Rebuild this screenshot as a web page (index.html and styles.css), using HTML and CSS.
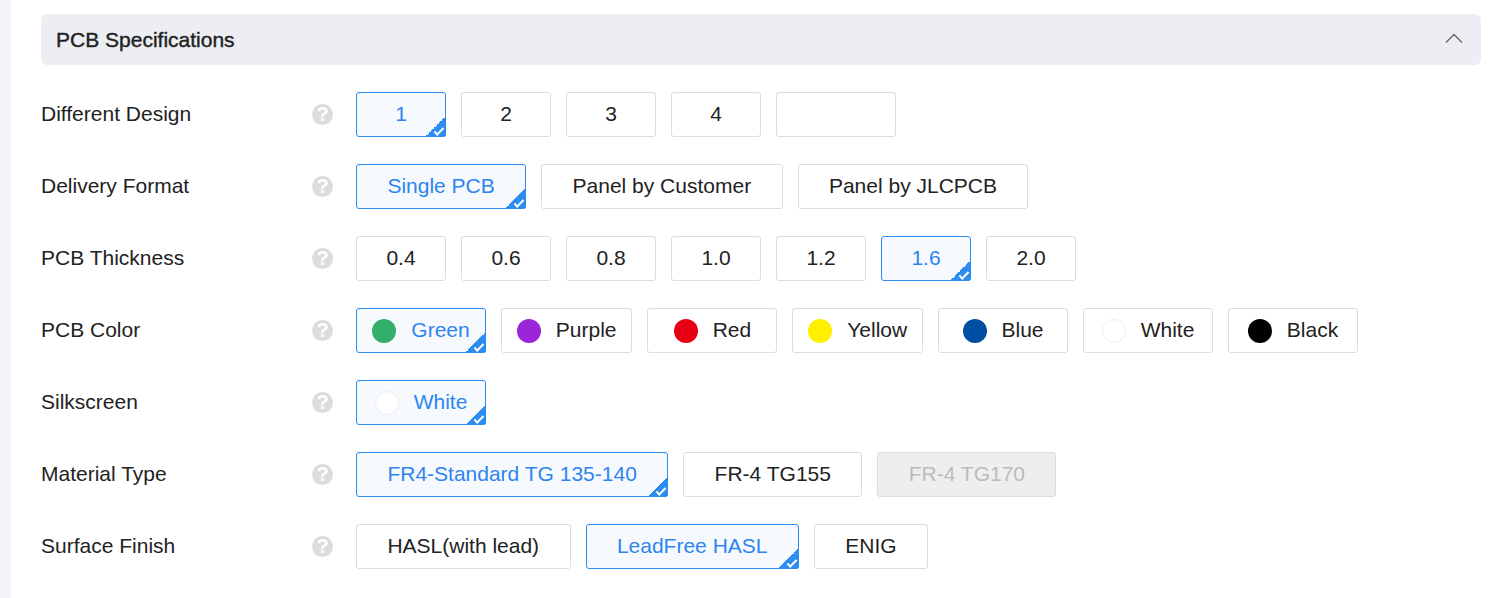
FILE: index.html
```html
<!DOCTYPE html>
<html>
<head>
    <title>PCB Specifications</title>
    <link rel="stylesheet" href="styles.css">
</head>
<body>
    <div class="page">
        <div class="section-head">
            <h2>PCB Specifications</h2>
            <svg class="arrow" width="18" height="10" viewBox="0 0 18 10"><path d="M1 9.5L9 1.5L17 9.5" fill="none" stroke="#666" stroke-width="1.3"/></svg>
        </div>

        <div class="row">
            <label>Different Design</label>
            <span class="help">?</span>
            <div class="options">
                <button class="opt num active">1</button>
                <button class="opt num">2</button>
                <button class="opt num">3</button>
                <button class="opt num">4</button>
                <button class="opt blank"></button>
            </div>
        </div>

        <div class="row">
            <label>Delivery Format</label>
            <span class="help">?</span>
            <div class="options">
                <button class="opt active">Single PCB</button>
                <button class="opt">Panel by Customer</button>
                <button class="opt">Panel by JLCPCB</button>
            </div>
        </div>

        <div class="row">
            <label>PCB Thickness</label>
            <span class="help">?</span>
            <div class="options">
                <button class="opt num">0.4</button>
                <button class="opt num">0.6</button>
                <button class="opt num">0.8</button>
                <button class="opt num">1.0</button>
                <button class="opt num">1.2</button>
                <button class="opt num active">1.6</button>
                <button class="opt num">2.0</button>
            </div>
        </div>

        <div class="row">
            <label>PCB Color</label>
            <span class="help">?</span>
            <div class="options">
                <button class="opt color active"><i class="dot green"></i>Green</button>
                <button class="opt color"><i class="dot purple"></i>Purple</button>
                <button class="opt color"><i class="dot red"></i>Red</button>
                <button class="opt color"><i class="dot yellow"></i>Yellow</button>
                <button class="opt color"><i class="dot blue"></i>Blue</button>
                <button class="opt color"><i class="dot white"></i>White</button>
                <button class="opt color"><i class="dot black"></i>Black</button>
            </div>
        </div>

        <div class="row">
            <label>Silkscreen</label>
            <span class="help">?</span>
            <div class="options">
                <button class="opt color active"><i class="dot white"></i>White</button>
            </div>
        </div>

        <div class="row">
            <label>Material Type</label>
            <span class="help">?</span>
            <div class="options">
                <button class="opt active">FR4-Standard TG 135-140</button>
                <button class="opt">FR-4 TG155</button>
                <button class="opt disabled">FR-4 TG170</button>
            </div>
        </div>

        <div class="row">
            <label>Surface Finish</label>
            <span class="help">?</span>
            <div class="options">
                <button class="opt">HASL(with lead)</button>
                <button class="opt active">LeadFree HASL</button>
                <button class="opt">ENIG</button>
            </div>
        </div>
    </div>
</body>
</html>
```

FILE: styles.css
```css
html, body {
    margin: 0;
    height: 100%;
    overflow: hidden;
}

body {
    font-family: "Liberation Sans", Arial, sans-serif;
    background-color: #f2f3f8;
    color: #222;
}

.page {
    margin-left: 11px;
    height: 100%;
    padding: 14px 23px 0 30px;
    background-color: #fff;
}

.section-head {
    display: flex;
    align-items: center;
    justify-content: space-between;
    height: 51px;
    padding: 1px 18px 0 15px;
    border-radius: 6px;
    background-color: #edeef3;
    box-sizing: border-box;
    margin-bottom: 27px;
}

.section-head h2 {
    margin: 0;
    font-size: 21px;
    font-weight: normal;
    -webkit-text-stroke: 0.4px #222;
}

.arrow {
    margin-bottom: 5px;
}

.row {
    display: flex;
    align-items: center;
    height: 45px;
    margin-bottom: 27px;
}

.row label {
    width: 271px;
    padding-bottom: 2px;
    font-size: 21px;
}

.help {
    width: 21px;
    height: 21px;
    margin-right: 23px;
    border-radius: 50%;
    background-color: #dcdcdc;
    color: #fff;
    font-size: 20px;
    font-weight: bold;
    line-height: 21px;
    text-align: center;
}

.options {
    display: flex;
    gap: 15px;
}

.opt {
    position: relative;
    height: 45px;
    padding: 0 30.4px 2px;
    border: 1px solid #dcdcdc;
    border-radius: 3px;
    background-color: #fff;
    color: #222;
    font-family: inherit;
    font-size: 21px;
    box-sizing: border-box;
}

.num {
    width: 90px;
    padding: 0 0 2px;
}

.blank {
    width: 120px;
}

.color {
    display: flex;
    align-items: center;
    justify-content: center;
    min-width: 130px;
    padding: 0 14.85px 2px;
}

.dot {
    width: 24px;
    height: 24px;
    margin: 2px 15px 0 0;
    border-radius: 50%;
    box-sizing: border-box;
}

.green { background-color: #32af6b; }
.purple { background-color: #9b26d9; }
.red { background-color: #e60012; }
.yellow { background-color: #fff000; }
.blue { background-color: #004ea2; }
.black { background-color: #000; }
.white {
    background-color: #fff;
    border: 1px solid #eee;
}

.active {
    border-color: #2d8cf0;
    background-color: #f6faff;
    color: #2d84ee;
}

.active::after {
    content: "";
    position: absolute;
    right: -1px;
    bottom: -1px;
    width: 21px;
    height: 21px;
    border-bottom-right-radius: 3px;
    background: linear-gradient(135deg, transparent 50%, #2d8cf0 50%);
}

.active::before {
    content: "";
    position: absolute;
    z-index: 1;
    right: 1px;
    bottom: 3px;
    width: 8px;
    height: 3px;
    border-left: 2px solid #fff;
    border-bottom: 2px solid #fff;
    transform: rotate(-45deg);
}

.disabled {
    background-color: #eee;
    color: #bbb;
}
```
